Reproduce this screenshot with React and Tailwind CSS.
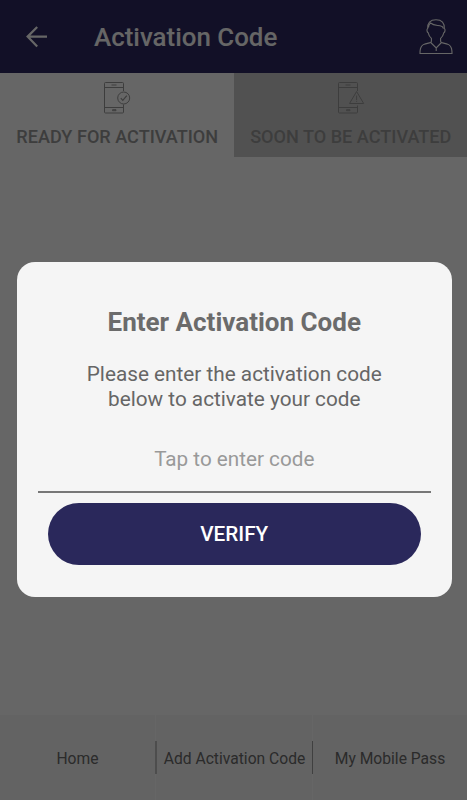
import { useState } from "react";

const BackIcon = () => (
  <svg width="22" height="22" viewBox="0 0 22 22" fill="none" stroke="currentColor" strokeWidth="2.2">
    <path d="M21 10.600H2M11.200 1L1.600 10.600l9.600 9.800" />
  </svg>
);

const UserIcon = () => (
  <svg width="34" height="36" viewBox="0 0 34 36" fill="none" stroke="currentColor" strokeWidth="1.1">
    <path d="M12.400 22.300c-.3 1-.8 1.300-2 1.600C5 25 2.500 25.500 1.500 29.500c-.4 1.600-.5 3.300-.5 5h32c0-1.700-.1-3.400-.5-5-1-4-3.500-4.500-8.900-5.600-1.200-.3-1.700-.6-2-1.600v-3c1.800-1.600 2.800-3.700 3.200-5.500 1.400-.7 1.700-3.700.5-4.300C25.600 4 23 .8 17 .8S8.400 4 8.700 9.500c-1.200.6-.9 3.600.5 4.300.4 1.800 1.400 3.900 3.200 5.500z" />
    <path d="M9.500 8.500c0-2 .6-3.500 2-4.500 3.300 2.800 6.500 2.200 9.500 2.700 2 .3 3 1 3.500 2.800M11.700 23.500l5.500 5.500 5.300-5.500M17.200 29v3" />
  </svg>
);

const PhoneCheckIcon = () => (
  <svg width="27" height="32" viewBox="0 0 27 32" fill="none" stroke="currentColor">
    <path d="M19.500 9V1.500c0-.7-.3-1-1-1h-17c-.7 0-1 .3-1 1v28.500c0 .7.300 1 1 1h17c.7 0 1-.3 1-1V22.500M.5 5.500h19M.5 25.500h19M7.500 3h5" />
    <path d="M8.500 27.700h3.500v1H8.500z" />
    <circle cx="19.700" cy="16" r="6" />
    <path d="M16.800 16.200l2 2.200 4-4.800" strokeWidth="1.200" />
  </svg>
);

const PhoneAlertIcon = () => (
  <svg width="27" height="32" viewBox="0 0 27 32" fill="none" stroke="currentColor">
    <path d="M19.500 9V1.500c0-.7-.3-1-1-1h-17c-.7 0-1 .3-1 1v28.500c0 .7.300 1 1 1h17c.7 0 1-.3 1-1V23.500M.5 5.500h19M.5 25.500h19M7.500 3h5" />
    <path d="M8.500 27.700h3.500v1H8.500z" />
    <path d="M18.600 9.500L11.500 21.500h14.200zM18.600 13.500v4.500M18.600 18.800v1" />
  </svg>
);

const tabs = [
  { label: "READY FOR ACTIVATION", Icon: PhoneCheckIcon },
  { label: "SOON TO BE ACTIVATED", Icon: PhoneAlertIcon },
];

const App = () => {
  const [code, setCode] = useState("");
  const [activeTab, setActiveTab] = useState(0);

  return (
    <div className="relative flex h-screen w-full flex-col overflow-hidden bg-white font-['Roboto',sans-serif]">
      {/* Header */}
      <header className="flex h-[73px] shrink-0 items-center bg-[#2d2861] pl-[26px] pr-[14px] text-white">
        <button aria-label="Back">
          <BackIcon />
        </button>
        <h1 className="ml-[46px] mt-px flex-1 text-[25.9px] font-medium leading-8">Activation Code</h1>
        <button aria-label="Profile">
          <UserIcon />
        </button>
      </header>

      {/* Tabs */}
      <div className="grid h-[84px] shrink-0 grid-cols-2">
        {tabs.map(({ label, Icon }, i) => (
          <button
            key={label}
            onClick={() => setActiveTab(i)}
            className={`flex flex-col items-center pt-[9px] text-[#999999] ${i === activeTab ? "bg-white" : "bg-[#cbcbcb]"}`}
          >
            <span className="pl-[2px]">
              <Icon />
            </span>
            <span className="mt-[11px] whitespace-nowrap pl-px text-[18.1px] font-medium leading-6">{label}</span>
          </button>
        ))}
      </div>

      {/* Bottom navigation */}
      <nav className="mt-auto grid h-[85px] shrink-0 grid-cols-[155px_158px_1fr] bg-[#f7f7f7] text-[15.65px] text-[#6b6b6b]">
        <button className="pt-[3px]">Home</button>
        <div className="flex items-center border-x border-white">
          <button className="-mx-px h-[33px] flex-1 whitespace-nowrap border-l-2 border-r border-l-[#c0c0c0] border-r-[#a0a0a0] pt-[3px]">
            Add Activation Code
          </button>
        </div>
        <button className="pt-[3px]">My Mobile Pass</button>
      </nav>

      {/* Activation dialog */}
      <div className="absolute inset-0 flex items-start bg-black/60 pl-[17px] pt-[262px]">
        <div className="flex h-[335px] w-[434.500px] flex-col rounded-[18px] bg-[#f5f5f5] px-[21px] text-center">
          <h2 className="mt-[44px] text-[26px] font-bold leading-8 text-[#6b6b6b]">Enter Activation Code</h2>
          <p className="mt-[24px] text-[20.75px] leading-[25px] text-[#666666]">
            Please enter the activation code
            <br />
            below to activate your code
          </p>
          <input
            value={code}
            onChange={(e) => setCode(e.target.value)}
            placeholder="Tap to enter code"
            className="mt-[13px] h-[68px] border-b-2 border-[#777777] pt-px text-center text-[20.7px] text-[#666666] outline-none placeholder:text-[#999999]"
          />
          <button className="mx-[10px] mt-[10px] h-[62px] rounded-full bg-[#2a285b] pt-[2px] text-[20.7px] font-medium text-white">
            VERIFY
          </button>
        </div>
      </div>
    </div>
  );
};

export default App;
